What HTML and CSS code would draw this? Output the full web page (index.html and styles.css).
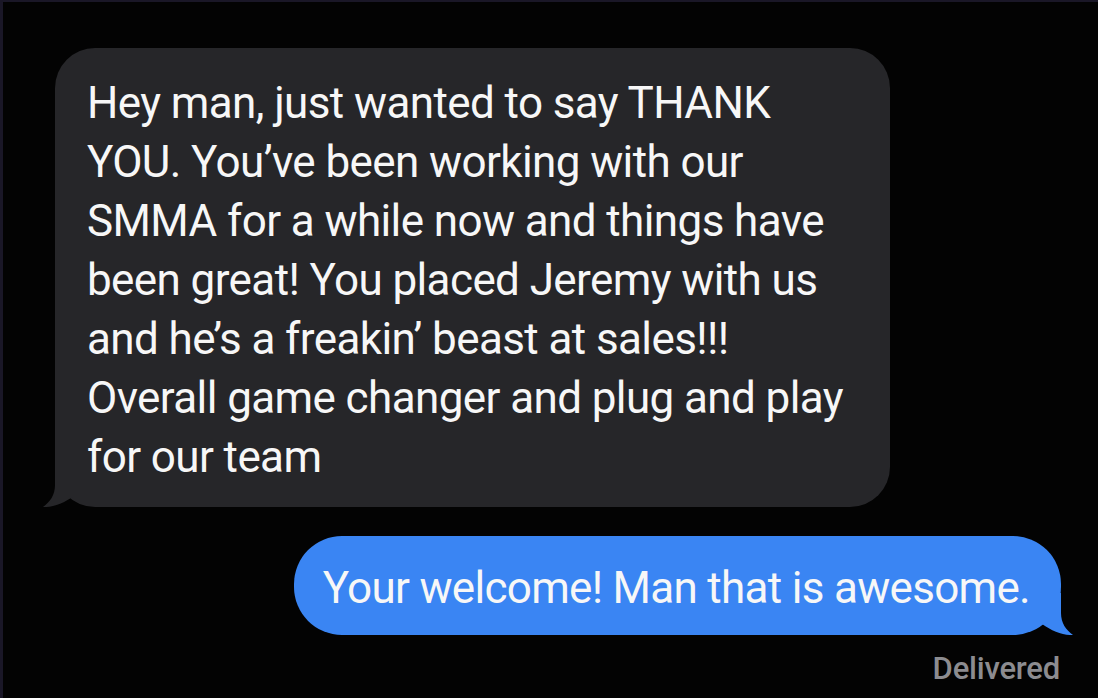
FILE: index.html
```html
<!DOCTYPE html>
<html>
<head lang="en">
    <meta charset="UTF-8">
    <title>Messages</title>
    <link rel="stylesheet" href="styles.css">
</head>
<body>
    <div id="screen">
        <div class="thread">
            <div class="bubble received">
                Hey man, just wanted to say THANK YOU. You’ve been working with our SMMA for a while now and things have been great! You placed Jeremy with us and he’s a freakin’ beast at sales!!! Overall game changer and plug and play for our team
                <svg class="tail" width="40" height="42" viewBox="0 0 40 42">
                    <path d="M14 0 L14 20 C14 30 9 37 2 42 C12 42.5 23 38 33 31 L33 0 Z"/>
                </svg>
            </div>
            <div class="bubble sent">
                Your welcome! Man that is awesome.
                <svg class="tail" width="40" height="42" viewBox="0 0 40 42">
                    <path d="M14 0 L14 20 C14 30 9 37 2 42 C12 42.5 23 38 33 31 L33 0 Z"/>
                </svg>
            </div>
            <div class="status">Delivered</div>
        </div>
    </div>
</body>
</html>
```

FILE: styles.css
```css
*{
    padding: 0;
    margin: 0;
    box-sizing: border-box;
}
body{
    background: #040404;
    font-family: Roboto, "Noto Sans", sans-serif;
}
#screen{
    width: 1098px;
    height: 698px;
    background: #030303;
    border-top: 2px solid #1a1727;
    border-left: 3px solid #1a1727;
    overflow: hidden;
}
.thread{
    display: flex;
    flex-direction: column;
    padding-top: 46px;
}
.bubble{
    position: relative;
    color: #f7f7f7;
    font-size: 44px;
    line-height: 59px;
    letter-spacing: -0.6px;
}
.bubble .tail{
    position: absolute;
    bottom: 0;
}
.received{
    align-self: flex-start;
    margin-left: 52px;
    width: 835px;
    padding: 26px 30px 20px 32px;
    background: #262629;
    border-radius: 40px;
}
.received .tail{
    left: -14px;
    fill: #262629;
}
.sent{
    align-self: flex-end;
    margin-top: 29px;
    margin-right: 37px;
    padding: 23px 31px 17px 29px;
    background: #3a85f3;
    border-radius: 48px;
    letter-spacing: -0.7px;
}
.sent .tail{
    right: -14px;
    fill: #3a85f3;
    transform: scaleX(-1);
}
.status{
    align-self: flex-end;
    margin-right: 38px;
    margin-top: 15px;
    color: #8c8c90;
    font-size: 31px;
    font-weight: 500;
    line-height: 38px;
    letter-spacing: -0.2px;
}
```
